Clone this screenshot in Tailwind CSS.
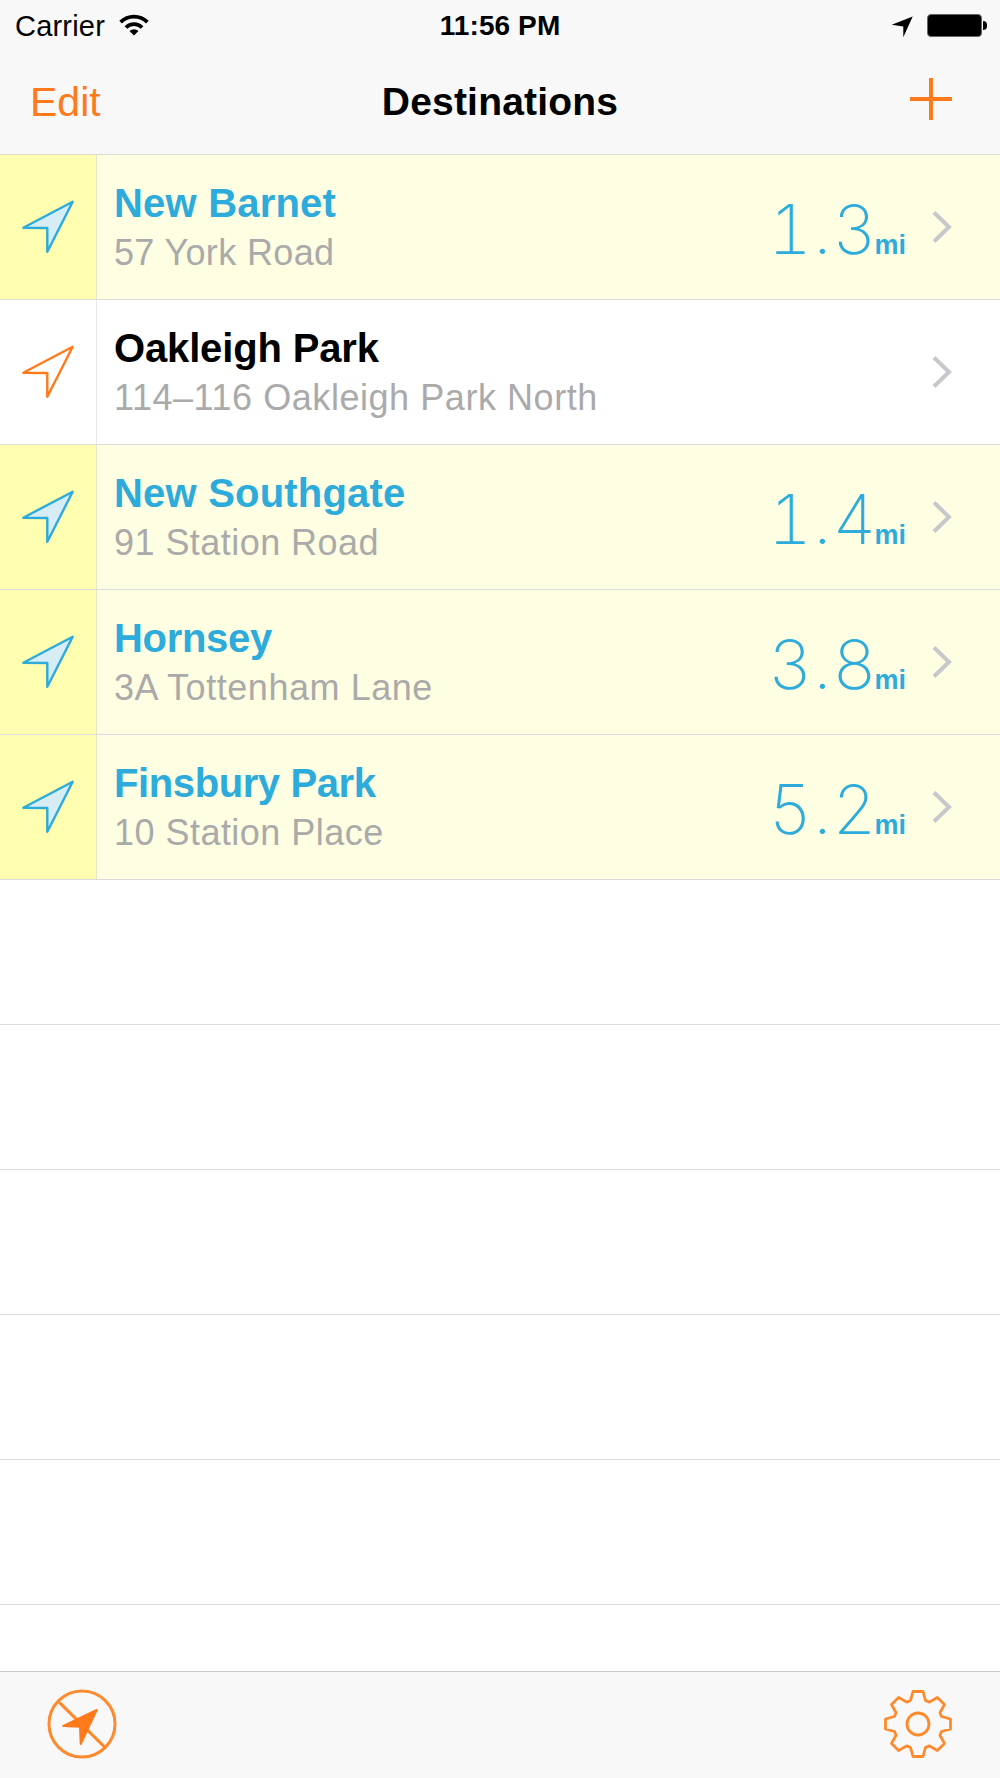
<!DOCTYPE html>
<html>
<head>
<meta charset="utf-8">
<script src="https://cdn.jsdelivr.net/npm/@tailwindcss/browser@4"></script>
</head>
<body class="bg-white">
<div class="w-[1000px] h-[1778px] flex flex-col overflow-hidden font-['Liberation_Sans',Arial,sans-serif] text-black bg-white">
  <header class="h-[155px] shrink-0 bg-[#f8f8f8] border-b border-[#dcdcd2]">
    <div class="h-[52px] grid grid-cols-3 items-center">
      <div class="pl-[15px] flex items-center gap-[14px]">
        <span class="text-[29px] leading-[52px] tracking-[0.2px]">Carrier</span>
        <svg class="w-[30px] h-[24px] mb-[2px]" viewBox="0 0 30 22"><path d="M1.6 8.2A19 19 0 0 1 28.4 8.2" fill="none" stroke="#000" stroke-width="3.8"/><path d="M6.9 13.5A11.5 11.5 0 0 1 23.1 13.5" fill="none" stroke="#000" stroke-width="3.8"/><path d="M15 21.6L10.5 17A6.5 6.5 0 0 1 19.5 17Z" fill="#000"/></svg>
      </div>
      <div class="text-center text-[28px] font-bold leading-[52px] tracking-[0.1px]">11:56 PM</div>
      <div class="flex justify-end items-center gap-[14px] pr-[13px] pb-[2px]">
        <svg class="w-[22px] h-[22px] mt-[3px]" viewBox="0 0 22 22"><path d="M21.7 0.5L0.7 8.8L12.3 10.5V21.2Z" fill="#000"/></svg>
        <div class="flex items-center gap-[1px]">
          <div class="w-[55px] h-[23px] rounded-[4px] border border-[#666] bg-black"></div>
          <div class="w-[4px] h-[9px] rounded-r-full bg-black"></div>
        </div>
      </div>
    </div>
    <div class="h-[102px] grid grid-cols-3 items-center">
      <div class="pl-[30px] pb-[2px] text-[41px] leading-[50px] text-[#ff7a1a]">Edit</div>
      <div class="pb-[2px] text-center text-[39px] leading-[50px] font-bold whitespace-nowrap tracking-[0.2px]">Destinations</div>
      <div class="flex justify-end pr-[48px] pb-[8px]">
        <svg class="w-[42px] h-[42px]" viewBox="0 0 42 42"><path d="M21 0V42M0 21H42" stroke="#ff7a1a" stroke-width="4" fill="none"/></svg>
      </div>
    </div>
  </header>

  <main class="flex-1 flex flex-col">
    <!-- New Barnet -->
    <div class="h-[145px] shrink-0 flex border-b border-[#dcdcdc] bg-[#fefee3]">
      <div class="w-[97px] shrink-0 flex items-center justify-center bg-[#fffdaf] border-r border-[#e6e6c8]">
        <svg class="w-[60px] h-[60px]" viewBox="0 0 60 60"><path d="M54.7 4.7L5.3 30.7L29.3 31V54.7Z" fill="#d6edf5" stroke="#2dabdb" stroke-width="2.4" stroke-linejoin="round"/></svg>
      </div>
      <div class="flex-1 pl-[17px] pt-[24px]">
        <div class="text-[40px] leading-[49px] font-bold tracking-[0.2px] text-[#2dabdb]">New Barnet</div>
        <div class="text-[36px] leading-[49px] tracking-[0.35px] text-[#aaaaaa]">57 York Road</div>
      </div>
      <div class="flex items-baseline pt-[32px] pr-[12px] text-[#2dabdb]"><span class="font-['Inter',sans-serif] font-extralight tabular-nums tracking-[1px] text-[68px] leading-[84px]">1.3</span><span class="text-[27px] font-bold -ml-[3px]">mi</span></div>
      <div class="w-[82px] shrink-0 flex items-center pl-[13px]"><svg class="w-[24px] h-[36px]" viewBox="0 0 24 36"><path d="M3 3.5L18 18L3 32.5" fill="none" stroke="#c7c7cc" stroke-width="4"/></svg></div>
    </div>
    <!-- Oakleigh Park -->
    <div class="h-[145px] shrink-0 flex border-b border-[#dcdcdc] bg-white">
      <div class="w-[97px] shrink-0 flex items-center justify-center border-r border-[#e6e6e6]">
        <svg class="w-[60px] h-[60px]" viewBox="0 0 60 60"><path d="M54.7 4.7L5.3 30.7L29.3 31V54.7Z" fill="none" stroke="#ff7a1a" stroke-width="2.4" stroke-linejoin="round"/></svg>
      </div>
      <div class="flex-1 pl-[17px] pt-[24px]">
        <div class="text-[40px] leading-[49px] font-bold tracking-[-0.15px] text-black">Oakleigh Park</div>
        <div class="text-[36px] leading-[49px] tracking-[0.55px] text-[#aaaaaa]">114–116 Oakleigh Park North</div>
      </div>
      <div class="w-[82px] shrink-0 flex items-center pl-[13px]"><svg class="w-[24px] h-[36px]" viewBox="0 0 24 36"><path d="M3 3.5L18 18L3 32.5" fill="none" stroke="#c7c7cc" stroke-width="4"/></svg></div>
    </div>
    <!-- New Southgate -->
    <div class="h-[145px] shrink-0 flex border-b border-[#dcdcdc] bg-[#fefee3]">
      <div class="w-[97px] shrink-0 flex items-center justify-center bg-[#fffdaf] border-r border-[#e6e6c8]">
        <svg class="w-[60px] h-[60px]" viewBox="0 0 60 60"><path d="M54.7 4.7L5.3 30.7L29.3 31V54.7Z" fill="#d6edf5" stroke="#2dabdb" stroke-width="2.4" stroke-linejoin="round"/></svg>
      </div>
      <div class="flex-1 pl-[17px] pt-[24px]">
        <div class="text-[40px] leading-[49px] font-bold tracking-[0.2px] text-[#2dabdb]">New Southgate</div>
        <div class="text-[36px] leading-[49px] tracking-[0.45px] text-[#aaaaaa]">91 Station Road</div>
      </div>
      <div class="flex items-baseline pt-[32px] pr-[12px] text-[#2dabdb]"><span class="font-['Inter',sans-serif] font-extralight tabular-nums tracking-[1px] text-[68px] leading-[84px]">1.4</span><span class="text-[27px] font-bold -ml-[3px]">mi</span></div>
      <div class="w-[82px] shrink-0 flex items-center pl-[13px]"><svg class="w-[24px] h-[36px]" viewBox="0 0 24 36"><path d="M3 3.5L18 18L3 32.5" fill="none" stroke="#c7c7cc" stroke-width="4"/></svg></div>
    </div>
    <!-- Hornsey -->
    <div class="h-[145px] shrink-0 flex border-b border-[#dcdcdc] bg-[#fefee3]">
      <div class="w-[97px] shrink-0 flex items-center justify-center bg-[#fffdaf] border-r border-[#e6e6c8]">
        <svg class="w-[60px] h-[60px]" viewBox="0 0 60 60"><path d="M54.7 4.7L5.3 30.7L29.3 31V54.7Z" fill="#d6edf5" stroke="#2dabdb" stroke-width="2.4" stroke-linejoin="round"/></svg>
      </div>
      <div class="flex-1 pl-[17px] pt-[24px]">
        <div class="text-[40px] leading-[49px] font-bold tracking-[-0.3px] text-[#2dabdb]">Hornsey</div>
        <div class="text-[36px] leading-[49px] tracking-[0.55px] text-[#aaaaaa]">3A Tottenham Lane</div>
      </div>
      <div class="flex items-baseline pt-[32px] pr-[12px] text-[#2dabdb]"><span class="font-['Inter',sans-serif] font-extralight tabular-nums tracking-[1px] text-[68px] leading-[84px]">3.8</span><span class="text-[27px] font-bold -ml-[3px]">mi</span></div>
      <div class="w-[82px] shrink-0 flex items-center pl-[13px]"><svg class="w-[24px] h-[36px]" viewBox="0 0 24 36"><path d="M3 3.5L18 18L3 32.5" fill="none" stroke="#c7c7cc" stroke-width="4"/></svg></div>
    </div>
    <!-- Finsbury Park -->
    <div class="h-[145px] shrink-0 flex border-b border-[#dcdcdc] bg-[#fefee3]">
      <div class="w-[97px] shrink-0 flex items-center justify-center bg-[#fffdaf] border-r border-[#e6e6c8]">
        <svg class="w-[60px] h-[60px]" viewBox="0 0 60 60"><path d="M54.7 4.7L5.3 30.7L29.3 31V54.7Z" fill="#d6edf5" stroke="#2dabdb" stroke-width="2.4" stroke-linejoin="round"/></svg>
      </div>
      <div class="flex-1 pl-[17px] pt-[24px]">
        <div class="text-[40px] leading-[49px] font-bold tracking-[-0.4px] text-[#2dabdb]">Finsbury Park</div>
        <div class="text-[36px] leading-[49px] tracking-[0.47px] text-[#aaaaaa]">10 Station Place</div>
      </div>
      <div class="flex items-baseline pt-[32px] pr-[12px] text-[#2dabdb]"><span class="font-['Inter',sans-serif] font-extralight tabular-nums tracking-[1px] text-[68px] leading-[84px]">5.2</span><span class="text-[27px] font-bold -ml-[3px]">mi</span></div>
      <div class="w-[82px] shrink-0 flex items-center pl-[13px]"><svg class="w-[24px] h-[36px]" viewBox="0 0 24 36"><path d="M3 3.5L18 18L3 32.5" fill="none" stroke="#c7c7cc" stroke-width="4"/></svg></div>
    </div>
    <div class="h-[145px] shrink-0 border-b border-[#dcdcdc]"></div>
    <div class="h-[145px] shrink-0 border-b border-[#dcdcdc]"></div>
    <div class="h-[145px] shrink-0 border-b border-[#dcdcdc]"></div>
    <div class="h-[145px] shrink-0 border-b border-[#dcdcdc]"></div>
    <div class="h-[145px] shrink-0 border-b border-[#dcdcdc]"></div>
  </main>

  <footer class="h-[107px] shrink-0 bg-[#f8f8f8] border-t border-[#c8c8c8] flex items-center justify-between pl-[44px] pr-[46px] pb-[2px]">
    <svg class="w-[76px] h-[76px]" viewBox="0 0 76 76"><circle cx="38" cy="38" r="33" fill="none" stroke="#ff8a2e" stroke-width="3"/><path d="M15.3 16.4L61 61.4" stroke="#ff8a2e" stroke-width="3" fill="none"/><path d="M52.7 24L19.3 40L36 40.7L36.7 58Z" fill="#ff7a1a" stroke="#ff7a1a" stroke-width="2" stroke-linejoin="round"/></svg>
    <svg class="w-[72px] h-[72px]" viewBox="-36 -36 72 72"><path d="M-7.5 -23.5L-5 -32.5H5L7.5 -23.5L11.3 -21.9L19.4 -26.5L26.5 -19.4L21.9 -11.3L23.5 -7.5L32.5 -5V5L23.5 7.5L21.9 11.3L26.5 19.4L19.4 26.5L11.3 21.9L7.5 23.5L5 32.5H-5L-7.5 23.5L-11.3 21.9L-19.4 26.5L-26.5 19.4L-21.9 11.3L-23.5 7.5L-32.5 5V-5L-23.5 -7.5L-21.9 -11.3L-26.5 -19.4L-19.4 -26.5L-11.3 -21.9Z" fill="none" stroke="#ff8a2e" stroke-width="2.8" stroke-linejoin="round"/><circle cx="0" cy="0" r="11" fill="none" stroke="#ff8a2e" stroke-width="2.8"/></svg>
  </footer>
</div>
</body>
</html>
